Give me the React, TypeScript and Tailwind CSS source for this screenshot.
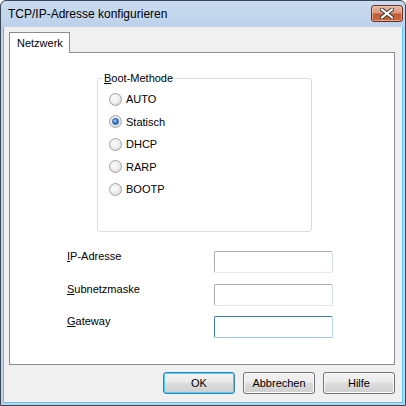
const font = { fontFamily: '"Liberation Sans", Arial, sans-serif' };

const Radio = ({ label, checked }: { label: string; checked?: boolean }) => (
  <div className="flex items-center h-[22.5px]">
    <span className="relative flex items-center justify-center w-[13px] h-[13px] rounded-full border border-[#a2a2a2] bg-[radial-gradient(circle_at_40%_40%,#fbfbfb_0%,#efefef_45%,#cdcdcd_100%)]">
      {checked && (
        <span className="w-[7px] h-[7px] rounded-full border border-[#2b5a94] bg-[radial-gradient(circle_at_40%_35%,#a8d8ff_0%,#3c86d2_45%,#173a78_100%)] shadow-[0_0_0_1px_#cfe4f7]" />
      )}
    </span>
    <span className="ml-[4px] text-[11px] text-black leading-[14px]">{label}</span>
  </div>
);

const Field = ({ label, ul, focused }: { label: string; ul: string; focused?: boolean }) => (
  <div className="flex items-start">
    <div className="w-[147px] text-[11px] leading-[13px] text-black mt-[-1px]">
      <u>{ul}</u>
      {label}
    </div>
    <div
      className={
        focused
          ? "w-[119px] h-[22px] bg-white border border-[#3d7bad] border-b-[#a4c9e3] border-r-[#b7d9ed] rounded-[2px]"
          : "w-[119px] h-[22px] bg-white border border-[#abadb3] border-b-[#e3e9ef] border-r-[#dbdfe6] rounded-[2px]"
      }
    />
  </div>
);

const Button = ({ label, def }: { label: string; def?: boolean }) => (
  <div
    className={
      "flex items-center justify-center w-[72px] h-[22px] rounded-[3px] border text-[11px] text-black bg-[linear-gradient(to_bottom,#f2f2f2_0%,#ebebeb_45%,#dddddd_50%,#cfcfcf_100%)] " +
      (def
        ? "border-[#3c7fb1] shadow-[inset_0_0_0_1px_#48d0fb]"
        : "border-[#707070] shadow-[inset_0_0_0_1px_#fcfcfc]")
    }
  >
    {label}
  </div>
);

export default function App() {
  return (
    <div
      style={font}
      className="w-[406px] h-[406px] flex flex-col bg-[linear-gradient(to_bottom,#c9dbef_0px,#bcd2ea_26px,#bcd2ea_100%)] border border-[#3a4656] rounded-t-[6px] overflow-hidden"
    >
      {/* title bar */}
      <div className="h-[26px] flex items-start justify-between pl-[7px] pr-[2px]">
        <span className="mt-[6px] text-[12px] leading-[15px] text-black">TCP/IP-Adresse konfigurieren</span>
        <div className="mt-[4px] w-[32px] h-[17px] rounded-[3px] border border-[#6a2f25] flex items-center justify-center bg-[linear-gradient(to_bottom,#e9b49f_0%,#d7987e_48%,#c25a36_52%,#c8693f_100%)] shadow-[inset_0_0_0_1px_rgba(255,220,200,0.5)]">
          <svg width="14" height="11" viewBox="0 0 14 11">
            <path d="M2 1.5 L12 9.5 M12 1.5 L2 9.5" stroke="#3b3b3b" strokeWidth="4" strokeLinecap="square" />
            <path d="M2 1.5 L12 9.5 M12 1.5 L2 9.5" stroke="#ffffff" strokeWidth="2" strokeLinecap="square" />
          </svg>
        </div>
      </div>

      {/* client area */}
      <div className="flex-1 mx-[2px] mb-[2px] bg-[#f0f0f0] border-b border-r border-l border-l-[#7fb2d8] border-[#5ec6ee] pl-[5px] pr-[7px] pt-[5px] flex flex-col">
        <div className="relative z-10 -mb-px w-[61px] h-[21px] bg-white border border-b-0 border-[#898c95] pl-[7px] pt-[3px] text-[11px] leading-[14px] text-black">
          Netzwerk
        </div>
        <div className="h-[313px] bg-white border border-[#898c95] flex flex-col">
          <fieldset className="mt-[18px] ml-[87px] w-[215px] border border-[#d5dfe5] rounded-[3px] px-[12px]">
            <legend className="ml-[-7px] px-px text-[11px] leading-[14px] text-black">
              <u>B</u>oot-Methode
            </legend>
            <div className="h-[146px] pt-[3px] -ml-px">
              <Radio label="AUTO" />
              <Radio label="Statisch" checked />
              <Radio label="DHCP" />
              <Radio label="RARP" />
              <Radio label="BOOTP" />
            </div>
          </fieldset>

          <div className="mt-[19px] ml-[57px] flex flex-col gap-[10.5px]">
            <Field ul="I" label="P-Adresse" />
            <Field ul="S" label="ubnetzmaske" />
            <Field ul="G" label="ateway" focused />
          </div>
        </div>

        <div className="mt-[7px] flex justify-end gap-[8px]">
          <Button label="OK" def />
          <Button label="Abbrechen" />
          <Button label="Hilfe" />
        </div>
      </div>
    </div>
  );
}
